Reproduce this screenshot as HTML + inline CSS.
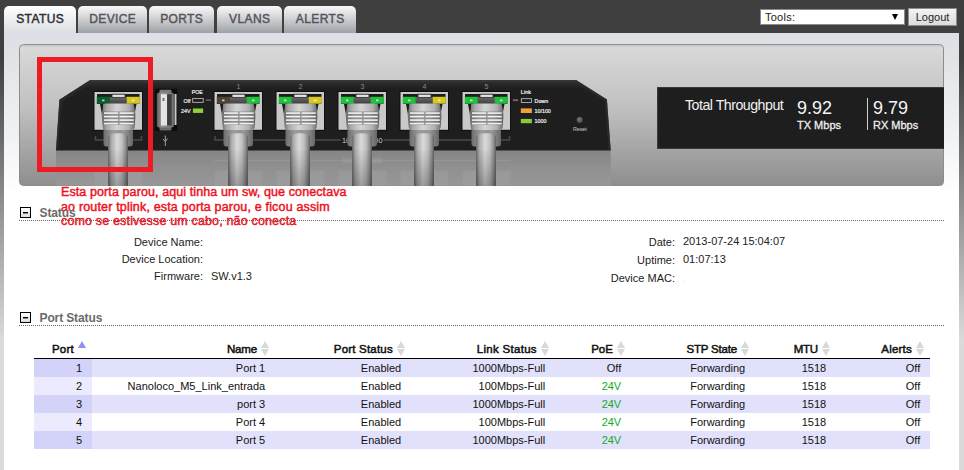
<!DOCTYPE html>
<html><head><meta charset="utf-8">
<style>
*{margin:0;padding:0;box-sizing:border-box}
html,body{width:964px;height:470px;overflow:hidden}
body{position:relative;font-family:"Liberation Sans",sans-serif;background:linear-gradient(to bottom,#404040 0px,#404040 60px,#dadada 340px,#dadada 470px)}
.abs{position:absolute;white-space:nowrap}
#tabs{position:absolute;left:4px;top:6px;height:27px;display:flex}
.tab{position:absolute;top:6px;text-align:center;height:27px;border-radius:5px 5px 0 0;font-weight:normal;font-size:12px;letter-spacing:0.4px;-webkit-text-stroke:0.45px currentColor;text-indent:0.4px;line-height:26px;color:#55555d;background:linear-gradient(to bottom,#f8f8f8 0%,#d6d7da 40%,#9ea1a6 100%)}
.tab.act{color:#2f2f33;background:linear-gradient(to bottom,#ffffff 0%,#eceef0 50%,#dcdfe3 100%)}
#panel{position:absolute;left:4px;top:33px;width:955px;height:437px;background:linear-gradient(to bottom,#dcdfe3 0px,#f0f1f3 100px,#ffffff 160px)}
#tools{position:absolute;left:760px;top:9px;width:145px;height:16px;background:#fff;border:1px solid #8a8a8a;font-size:11px;line-height:14px;padding-left:4px;color:#222;letter-spacing:0.25px}
#tools span{position:absolute;left:130.8px;top:3.8px;width:0;height:0;border-left:3px solid transparent;border-right:3px solid transparent;border-top:6px solid #000}
#logout{position:absolute;left:908px;top:8px;width:49px;height:18px;background:linear-gradient(#f4f4f4,#dcdcdc);border:1px solid #8d8d8d;font-size:11px;line-height:16px;text-align:center;color:#222}
.sec{position:absolute;left:19px;width:925px;height:1px;border-bottom:1px dotted #666}
.box{position:absolute;left:20px;width:11px;height:11px;border:1px solid #000;background:linear-gradient(#fff,#ddd)}
.box:after{content:"";position:absolute;left:2px;top:4px;width:5px;height:1px;background:#000;box-shadow:0 1px 0 rgba(0,0,0,0.45)}
.sectitle{position:absolute;left:39.5px;font-weight:bold;font-size:12px;color:#6a6a6a;letter-spacing:-0.12px}
.lbl{position:absolute;font-size:11px;color:#222;text-align:right;white-space:nowrap}
.val{position:absolute;font-size:11px;color:#222;white-space:nowrap}
#tbl{position:absolute;left:34px;top:340px;width:896px}
.hdr{position:absolute;top:0;height:18px;font-weight:bold;font-size:11px;color:#111;white-space:nowrap}
.row{position:absolute;left:0;width:896px;height:18px}
.cell{position:absolute;font-size:11px;color:#111;white-space:nowrap;line-height:18px}
.note{position:absolute;left:61px;font-weight:normal;font-size:12.5px;line-height:14px;color:#ee1122;white-space:nowrap;-webkit-text-stroke:0.45px #ee1122}
.rw{position:absolute;left:34px;width:896px;height:18px}
.rw.o{background:#e1e1fc}
.rw.e{background:#fff}
.rw i{position:absolute;left:0;top:0;width:58px;height:18px}
.rw.o i{background:#d3d3f9}
.rw.e i{background:#ebebfd}
.hline{position:absolute;left:34px;top:358px;width:896px;height:1px;background:#000}
.th{position:absolute;top:342px;font-weight:normal;font-size:11.5px;line-height:14px;color:#111;white-space:nowrap;-webkit-text-stroke:0.5px #111;letter-spacing:0.2px}
.sa{position:absolute;width:0;height:0;border-left:4.75px solid transparent;border-right:4.75px solid transparent;margin-left:-0.25px}
.sa.up{top:340.8px;border-bottom:7px solid #d8d8d8}
.sa.dn{top:349.3px;border-top:7px solid #d8d8d8}
.sa.act{border-bottom-color:#9090f5}
.td{position:absolute;font-size:11px;line-height:18px;color:#111;white-space:nowrap}
.td.g{color:#11aa22}
</style></head><body>
<div class="tab act" style="left:4px;width:72px">STATUS</div><div class="tab" style="left:78px;width:69px">DEVICE</div><div class="tab" style="left:149px;width:65px">PORTS</div><div class="tab" style="left:217px;width:65px">VLANS</div><div class="tab" style="left:284px;width:72px">ALERTS</div>
<div id="tools">Tools:<span></span></div>
<div id="logout">Logout</div>
<div id="panel"></div>

<svg id="dev" style="position:absolute;left:19px;top:44px" width="925" height="142" viewBox="19 44 925 142">
<defs>
<linearGradient id="pg" x1="0" y1="0" x2="0" y2="1"><stop offset="0" stop-color="#dadada"/><stop offset="0.45" stop-color="#c0c0c0"/><stop offset="1" stop-color="#8e8e8e"/></linearGradient>
<linearGradient id="cab" x1="0" y1="0" x2="1" y2="0"><stop offset="0" stop-color="#666"/><stop offset="0.15" stop-color="#a8a8a8"/><stop offset="0.45" stop-color="#dadada"/><stop offset="0.7" stop-color="#c0c0c0"/><stop offset="0.9" stop-color="#8a8a8a"/><stop offset="1" stop-color="#5e5e5e"/></linearGradient>
<linearGradient id="plg" x1="0" y1="0" x2="1" y2="0"><stop offset="0" stop-color="#6e6e6e"/><stop offset="0.15" stop-color="#a8a8a8"/><stop offset="0.45" stop-color="#d6d6d6"/><stop offset="0.8" stop-color="#b0b0b0"/><stop offset="1" stop-color="#6a6a6a"/></linearGradient>
<linearGradient id="rdg" x1="0" y1="0" x2="1" y2="0"><stop offset="0" stop-color="#6e6e6e"/><stop offset="0.3" stop-color="#939393"/><stop offset="0.7" stop-color="#8c8c8c"/><stop offset="1" stop-color="#666"/></linearGradient>
<linearGradient id="boot" x1="0" y1="0" x2="1" y2="0"><stop offset="0" stop-color="#6c6c6c"/><stop offset="0.3" stop-color="#9a9a9a"/><stop offset="0.7" stop-color="#949494"/><stop offset="1" stop-color="#666"/></linearGradient>
<linearGradient id="cabfade" x1="0" y1="0" x2="0" y2="1"><stop offset="0" stop-color="#000" stop-opacity="0.02"/><stop offset="1" stop-color="#000" stop-opacity="0.28"/></linearGradient>
<linearGradient id="tbar" x1="0" y1="0" x2="0" y2="1"><stop offset="0" stop-color="#6a6a6a"/><stop offset="1" stop-color="#3e3e3e"/></linearGradient>
<linearGradient id="body" x1="0" y1="80" x2="0" y2="150.5" gradientUnits="userSpaceOnUse"><stop offset="0" stop-color="#3a3a3a"/><stop offset="0.05" stop-color="#2a2a2a"/><stop offset="0.12" stop-color="#1f1f1f"/><stop offset="1" stop-color="#1e1e1e"/></linearGradient>
<linearGradient id="refl" x1="0" y1="0" x2="0" y2="1"><stop offset="0" stop-color="#858585"/><stop offset="0.5" stop-color="#909090"/><stop offset="1" stop-color="#979797"/></linearGradient>
<linearGradient id="usb" x1="0" y1="0" x2="1" y2="0"><stop offset="0" stop-color="#5e5e5e"/><stop offset="0.3" stop-color="#9a9a9a"/><stop offset="1" stop-color="#6a6a6a"/></linearGradient>
<radialGradient id="rst" cx="0.45" cy="0.4" r="0.7"><stop offset="0" stop-color="#7a7a7a"/><stop offset="1" stop-color="#3a3a3a"/></radialGradient>
</defs>
<rect x="19.5" y="44.5" width="924" height="141" rx="4" fill="url(#pg)" stroke="#8c8c8c"/>
<rect x="22" y="45.5" width="919" height="1" fill="#b4b4b4" opacity="0.6"/>
<path d="M56 150 L610.7 150 L611 185.5 L56 185.5 Z" fill="url(#refl)"/>
<rect x="94.5" y="170.5" width="48" height="15" fill="#a0a0a0" opacity="0.5"/>
<rect x="214.5" y="170.5" width="48" height="15" fill="#a0a0a0" opacity="0.5"/>
<rect x="276.5" y="170.5" width="48" height="15" fill="#a0a0a0" opacity="0.5"/>
<rect x="338.5" y="170.5" width="48" height="15" fill="#a0a0a0" opacity="0.5"/>
<rect x="400.5" y="170.5" width="48" height="15" fill="#a0a0a0" opacity="0.5"/>
<rect x="462.5" y="170.5" width="48" height="15" fill="#a0a0a0" opacity="0.5"/>
<rect x="214" y="160" width="296" height="1" fill="#a0a0a0" opacity="0.5"/>
<path d="M90 80 L576.3 80 L606.9 99.6 L610.7 150.5 L56 150.5 L59.4 99.7 Z" fill="url(#body)"/>
<path d="M59.4 99.7 L90 80.5 L92 82.5 L62 101.5 L58.2 149 L56 150 Z" fill="#2c2c2c" opacity="0.7"/>
<path d="M576.3 80.5 L606.9 99.6 L610.7 150 L608.5 150 L604.8 101 L575.5 82.5 Z" fill="#2e2e2e" opacity="0.7"/>
<rect x="657.5" y="87.5" width="290" height="61" fill="#1e1e1e" stroke="#3a3a3a"/>
<text x="685" y="110.2" font-family="Liberation Sans" font-size="14.2" letter-spacing="-0.5" fill="#f2f2f2">Total Throughput</text>
<text x="797" y="113.5" font-family="Liberation Sans" font-size="18" fill="#f5f5f5">9.92</text>
<text x="797" y="129" font-family="Liberation Sans" font-size="11" fill="#eeeeee" stroke="#eeeeee" stroke-width="0.3">TX Mbps</text>
<rect x="867" y="98" width="1" height="32" fill="#d0d0d0"/>
<text x="873" y="113.5" font-family="Liberation Sans" font-size="18" fill="#f5f5f5">9.79</text>
<text x="873" y="129" font-family="Liberation Sans" font-size="11" fill="#eeeeee" stroke="#eeeeee" stroke-width="0.3">RX Mbps</text>
<path d="M95.5 136 V140 H141.5 V136" fill="none" stroke="#4a4a4a" stroke-width="1.5"/>
<path d="M215 136 V140 H340.6 M383.7 140 H509.5 V136" fill="none" stroke="#4a4a4a" stroke-width="1.5"/>
<text x="362.2" y="143" font-family="Liberation Sans" font-size="7.3" fill="#c8c8c8" text-anchor="middle">10/100/1000</text>
<text x="362.2" y="163" font-family="Liberation Sans" font-size="7.3" fill="#b4b4b4" opacity="0.6" text-anchor="middle">10/100/1000</text>
<rect x="154.8" y="88.8" width="22.4" height="42.2" fill="#0c0c0c"/>
<rect x="159.5" y="89.8" width="12" height="4" rx="1" fill="#7a7a7a"/>
<rect x="159.5" y="126.5" width="12" height="4" rx="1" fill="#6a6a6a"/>
<rect x="156.8" y="92.5" width="17.2" height="35" rx="2.5" fill="url(#usb)"/>
<rect x="160.9" y="94.2" width="6.2" height="31.3" fill="#e4e4e4"/>
<rect x="167.1" y="94.2" width="4.5" height="31.3" fill="#3c3c3c"/>
<rect x="174.5" y="94" width="2" height="31" fill="#c8c8c8"/>
<rect x="162.5" y="98" width="2" height="3" fill="#777"/>
<path d="M165.3 135.5 V146 M163 139 L165.3 141.5 L167.6 138.5" fill="none" stroke="#a0a0a0" stroke-width="1"/>
<text x="197.3" y="94.3" font-family="Liberation Sans" font-size="5.2" fill="#eeeeee" stroke="#eeeeee" stroke-width="0.2" text-anchor="middle">POE</text>
<text x="190.6" y="102.5" font-family="Liberation Sans" font-size="5.4" fill="#eeeeee" stroke="#eeeeee" stroke-width="0.2" text-anchor="end">Off</text>
<rect x="192.7" y="98.5" width="10.5" height="3.8" fill="none" stroke="#c8c8c8" stroke-width="0.8"/>
<rect x="206" y="99.6" width="5" height="1" fill="#888"/>
<text x="190.6" y="113" font-family="Liberation Sans" font-size="5.4" fill="#eeeeee" stroke="#eeeeee" stroke-width="0.2" text-anchor="end">24V</text>
<rect x="192.9" y="108.5" width="10.2" height="4.4" fill="#8fd23c"/>
<text x="520.8" y="94.2" font-family="Liberation Sans" font-size="5.6" fill="#f4f4f4" stroke="#f4f4f4" stroke-width="0.2">Link</text>
<rect x="513" y="99.6" width="5" height="1" fill="#aaa"/>
<rect x="521.3" y="98.7" width="10.2" height="3.8" fill="none" stroke="#c8c8c8" stroke-width="0.8"/>
<text x="534.6" y="102.8" font-family="Liberation Sans" font-size="5.3" fill="#f4f4f4" stroke="#f4f4f4" stroke-width="0.2">Down</text>
<rect x="520.8" y="108.4" width="11.1" height="4.6" fill="#f2a236"/>
<text x="534.6" y="113" font-family="Liberation Sans" font-size="5.3" fill="#f4f4f4" stroke="#f4f4f4" stroke-width="0.2">10/100</text>
<rect x="520.8" y="118.9" width="11.1" height="4.3" fill="#8acc36"/>
<text x="534.6" y="123.2" font-family="Liberation Sans" font-size="5.3" fill="#f4f4f4" stroke="#f4f4f4" stroke-width="0.2">1000</text>
<circle cx="579.7" cy="120" r="3.5" fill="url(#rst)" stroke="#111" stroke-width="0.5"/>
<text x="579.8" y="131.4" font-family="Liberation Sans" font-size="5.3" fill="#a8a8a8" stroke="#a8a8a8" stroke-width="0.15" text-anchor="middle">Reset</text>
<rect x="93.5" y="90.8" width="49.5" height="40" fill="#0e0e0e"/>
<rect x="94.5" y="92" width="47.5" height="37.8" fill="#c9c9c9"/>
<rect x="97.0" y="94" width="42.5" height="10" fill="#1c1c1c"/>
<path d="M100.0 104 H103.5 L104.0 125 Z" fill="#1c1c1c"/>
<path d="M136.5 104 H133.0 L132.5 125 Z" fill="#1c1c1c"/>
<rect x="109.5" y="97" width="17.5" height="7" fill="url(#tbar)"/>
<rect x="112.0" y="94.2" width="13" height="3.2" fill="#e4e4e4" stroke="#333" stroke-width="0.9"/>
<rect x="97.0" y="97" width="12.5" height="6.5" fill="#0b5e2c" stroke="#0b5e2c" stroke-opacity="0.45" stroke-width="1"/>
<rect x="127.0" y="97" width="12.5" height="6.5" fill="#d8c81c" stroke="#d8c81c" stroke-opacity="0.45" stroke-width="1"/>
<rect x="102.0" y="99.6" width="2.5" height="1.6" fill="#e8fff0" opacity="0.8"/>
<rect x="132.0" y="99.6" width="2.5" height="1.6" fill="#e8fff0" opacity="0.8"/>
<path d="M103.5 128 H133.0 V143.5 Q133.0 146.5 130.0 146.5 H106.5 Q103.5 146.5 103.5 143.5 Z" fill="url(#boot)"/>
<path d="M103.2 106 Q103.2 103.6 105.7 103.6 H131.7 Q134.2 103.6 134.2 106 L135.5 115 L134.7 127.5 Q134.3 130 131.7 130 H105.7 Q103.1 130 102.7 127.5 L101.7 115 Z" fill="url(#plg)"/>
<path d="M108.1 186 V138 Q108.1 133.3 118.0 133.3 Q127.9 133.3 127.9 138 V186 Z" fill="url(#cab)"/>
<rect x="108.1" y="150" width="19.8" height="36" fill="url(#cabfade)"/>
<path d="M103.1 111.5 H134.5 L135.1 118 L134.7 125 H103.1 L102.4 118 Z" fill="url(#rdg)"/>
<rect x="104.0" y="112.3" width="14.2" height="1.6" fill="#f2f2f2"/>
<rect x="119.5" y="112.3" width="14.2" height="1.6" fill="#f2f2f2"/>
<rect x="104.0" y="115.8" width="14.2" height="1.6" fill="#f2f2f2"/>
<rect x="119.5" y="115.8" width="14.2" height="1.6" fill="#f2f2f2"/>
<rect x="104.0" y="119.3" width="14.2" height="1.6" fill="#f2f2f2"/>
<rect x="119.5" y="119.3" width="14.2" height="1.6" fill="#f2f2f2"/>
<rect x="104.0" y="122.8" width="14.2" height="1.6" fill="#f2f2f2"/>
<rect x="119.5" y="122.8" width="14.2" height="1.6" fill="#f2f2f2"/>
<text x="238.5" y="89" font-family="Liberation Sans" font-size="7" fill="#8a8a8a" text-anchor="middle">1</text>
<rect x="213.5" y="90.8" width="49.5" height="40" fill="#0e0e0e"/>
<rect x="214.5" y="92" width="47.5" height="37.8" fill="#c9c9c9"/>
<rect x="217.0" y="94" width="42.5" height="10" fill="#1c1c1c"/>
<path d="M220.0 104 H223.5 L224.0 125 Z" fill="#1c1c1c"/>
<path d="M256.5 104 H253.0 L252.5 125 Z" fill="#1c1c1c"/>
<rect x="229.5" y="97" width="17.5" height="7" fill="url(#tbar)"/>
<rect x="232.0" y="94.2" width="13" height="3.2" fill="#e4e4e4" stroke="#333" stroke-width="0.9"/>
<rect x="217.0" y="97" width="12.5" height="6.5" fill="#4c4236" stroke="#4c4236" stroke-opacity="0.45" stroke-width="1"/>
<rect x="247.0" y="97" width="12.5" height="6.5" fill="#1fc23a" stroke="#1fc23a" stroke-opacity="0.45" stroke-width="1"/>
<rect x="222.0" y="99.6" width="2.5" height="1.6" fill="#e8fff0" opacity="0.8"/>
<rect x="252.0" y="99.6" width="2.5" height="1.6" fill="#e8fff0" opacity="0.8"/>
<path d="M223.5 128 H253.0 V143.5 Q253.0 146.5 250.0 146.5 H226.5 Q223.5 146.5 223.5 143.5 Z" fill="url(#boot)"/>
<path d="M223.2 106 Q223.2 103.6 225.7 103.6 H251.7 Q254.2 103.6 254.2 106 L255.5 115 L254.7 127.5 Q254.3 130 251.7 130 H225.7 Q223.1 130 222.7 127.5 L221.7 115 Z" fill="url(#plg)"/>
<path d="M228.1 186 V138 Q228.1 133.3 238.0 133.3 Q247.9 133.3 247.9 138 V186 Z" fill="url(#cab)"/>
<rect x="228.1" y="150" width="19.8" height="36" fill="url(#cabfade)"/>
<path d="M223.1 111.5 H254.5 L255.1 118 L254.7 125 H223.1 L222.4 118 Z" fill="url(#rdg)"/>
<rect x="224.0" y="112.3" width="14.2" height="1.6" fill="#f2f2f2"/>
<rect x="239.5" y="112.3" width="14.2" height="1.6" fill="#f2f2f2"/>
<rect x="224.0" y="115.8" width="14.2" height="1.6" fill="#f2f2f2"/>
<rect x="239.5" y="115.8" width="14.2" height="1.6" fill="#f2f2f2"/>
<rect x="224.0" y="119.3" width="14.2" height="1.6" fill="#f2f2f2"/>
<rect x="239.5" y="119.3" width="14.2" height="1.6" fill="#f2f2f2"/>
<rect x="224.0" y="122.8" width="14.2" height="1.6" fill="#f2f2f2"/>
<rect x="239.5" y="122.8" width="14.2" height="1.6" fill="#f2f2f2"/>
<text x="300.5" y="89" font-family="Liberation Sans" font-size="7" fill="#8a8a8a" text-anchor="middle">2</text>
<rect x="275.5" y="90.8" width="49.5" height="40" fill="#0e0e0e"/>
<rect x="276.5" y="92" width="47.5" height="37.8" fill="#c9c9c9"/>
<rect x="279.0" y="94" width="42.5" height="10" fill="#1c1c1c"/>
<path d="M282.0 104 H285.5 L286.0 125 Z" fill="#1c1c1c"/>
<path d="M318.5 104 H315.0 L314.5 125 Z" fill="#1c1c1c"/>
<rect x="291.5" y="97" width="17.5" height="7" fill="url(#tbar)"/>
<rect x="294.0" y="94.2" width="13" height="3.2" fill="#e4e4e4" stroke="#333" stroke-width="0.9"/>
<rect x="279.0" y="97" width="12.5" height="6.5" fill="#1fc23a" stroke="#1fc23a" stroke-opacity="0.45" stroke-width="1"/>
<rect x="309.0" y="97" width="12.5" height="6.5" fill="#d8c81c" stroke="#d8c81c" stroke-opacity="0.45" stroke-width="1"/>
<rect x="284.0" y="99.6" width="2.5" height="1.6" fill="#e8fff0" opacity="0.8"/>
<rect x="314.0" y="99.6" width="2.5" height="1.6" fill="#e8fff0" opacity="0.8"/>
<path d="M285.5 128 H315.0 V143.5 Q315.0 146.5 312.0 146.5 H288.5 Q285.5 146.5 285.5 143.5 Z" fill="url(#boot)"/>
<path d="M285.2 106 Q285.2 103.6 287.7 103.6 H313.7 Q316.2 103.6 316.2 106 L317.5 115 L316.7 127.5 Q316.3 130 313.7 130 H287.7 Q285.1 130 284.7 127.5 L283.7 115 Z" fill="url(#plg)"/>
<path d="M290.1 186 V138 Q290.1 133.3 300.0 133.3 Q309.9 133.3 309.9 138 V186 Z" fill="url(#cab)"/>
<rect x="290.1" y="150" width="19.8" height="36" fill="url(#cabfade)"/>
<path d="M285.1 111.5 H316.5 L317.1 118 L316.7 125 H285.1 L284.4 118 Z" fill="url(#rdg)"/>
<rect x="286.0" y="112.3" width="14.2" height="1.6" fill="#f2f2f2"/>
<rect x="301.5" y="112.3" width="14.2" height="1.6" fill="#f2f2f2"/>
<rect x="286.0" y="115.8" width="14.2" height="1.6" fill="#f2f2f2"/>
<rect x="301.5" y="115.8" width="14.2" height="1.6" fill="#f2f2f2"/>
<rect x="286.0" y="119.3" width="14.2" height="1.6" fill="#f2f2f2"/>
<rect x="301.5" y="119.3" width="14.2" height="1.6" fill="#f2f2f2"/>
<rect x="286.0" y="122.8" width="14.2" height="1.6" fill="#f2f2f2"/>
<rect x="301.5" y="122.8" width="14.2" height="1.6" fill="#f2f2f2"/>
<text x="362.5" y="89" font-family="Liberation Sans" font-size="7" fill="#8a8a8a" text-anchor="middle">3</text>
<rect x="337.5" y="90.8" width="49.5" height="40" fill="#0e0e0e"/>
<rect x="338.5" y="92" width="47.5" height="37.8" fill="#c9c9c9"/>
<rect x="341.0" y="94" width="42.5" height="10" fill="#1c1c1c"/>
<path d="M344.0 104 H347.5 L348.0 125 Z" fill="#1c1c1c"/>
<path d="M380.5 104 H377.0 L376.5 125 Z" fill="#1c1c1c"/>
<rect x="353.5" y="97" width="17.5" height="7" fill="url(#tbar)"/>
<rect x="356.0" y="94.2" width="13" height="3.2" fill="#e4e4e4" stroke="#333" stroke-width="0.9"/>
<rect x="341.0" y="97" width="12.5" height="6.5" fill="#1fc23a" stroke="#1fc23a" stroke-opacity="0.45" stroke-width="1"/>
<rect x="371.0" y="97" width="12.5" height="6.5" fill="#1fc23a" stroke="#1fc23a" stroke-opacity="0.45" stroke-width="1"/>
<rect x="346.0" y="99.6" width="2.5" height="1.6" fill="#e8fff0" opacity="0.8"/>
<rect x="376.0" y="99.6" width="2.5" height="1.6" fill="#e8fff0" opacity="0.8"/>
<path d="M347.5 128 H377.0 V143.5 Q377.0 146.5 374.0 146.5 H350.5 Q347.5 146.5 347.5 143.5 Z" fill="url(#boot)"/>
<path d="M347.2 106 Q347.2 103.6 349.7 103.6 H375.7 Q378.2 103.6 378.2 106 L379.5 115 L378.7 127.5 Q378.3 130 375.7 130 H349.7 Q347.1 130 346.7 127.5 L345.7 115 Z" fill="url(#plg)"/>
<path d="M352.1 186 V138 Q352.1 133.3 362.0 133.3 Q371.9 133.3 371.9 138 V186 Z" fill="url(#cab)"/>
<rect x="352.1" y="150" width="19.8" height="36" fill="url(#cabfade)"/>
<path d="M347.1 111.5 H378.5 L379.1 118 L378.7 125 H347.1 L346.4 118 Z" fill="url(#rdg)"/>
<rect x="348.0" y="112.3" width="14.2" height="1.6" fill="#f2f2f2"/>
<rect x="363.5" y="112.3" width="14.2" height="1.6" fill="#f2f2f2"/>
<rect x="348.0" y="115.8" width="14.2" height="1.6" fill="#f2f2f2"/>
<rect x="363.5" y="115.8" width="14.2" height="1.6" fill="#f2f2f2"/>
<rect x="348.0" y="119.3" width="14.2" height="1.6" fill="#f2f2f2"/>
<rect x="363.5" y="119.3" width="14.2" height="1.6" fill="#f2f2f2"/>
<rect x="348.0" y="122.8" width="14.2" height="1.6" fill="#f2f2f2"/>
<rect x="363.5" y="122.8" width="14.2" height="1.6" fill="#f2f2f2"/>
<text x="424.5" y="89" font-family="Liberation Sans" font-size="7" fill="#8a8a8a" text-anchor="middle">4</text>
<rect x="399.5" y="90.8" width="49.5" height="40" fill="#0e0e0e"/>
<rect x="400.5" y="92" width="47.5" height="37.8" fill="#c9c9c9"/>
<rect x="403.0" y="94" width="42.5" height="10" fill="#1c1c1c"/>
<path d="M406.0 104 H409.5 L410.0 125 Z" fill="#1c1c1c"/>
<path d="M442.5 104 H439.0 L438.5 125 Z" fill="#1c1c1c"/>
<rect x="415.5" y="97" width="17.5" height="7" fill="url(#tbar)"/>
<rect x="418.0" y="94.2" width="13" height="3.2" fill="#e4e4e4" stroke="#333" stroke-width="0.9"/>
<rect x="403.0" y="97" width="12.5" height="6.5" fill="#1fc23a" stroke="#1fc23a" stroke-opacity="0.45" stroke-width="1"/>
<rect x="433.0" y="97" width="12.5" height="6.5" fill="#d8c81c" stroke="#d8c81c" stroke-opacity="0.45" stroke-width="1"/>
<rect x="408.0" y="99.6" width="2.5" height="1.6" fill="#e8fff0" opacity="0.8"/>
<rect x="438.0" y="99.6" width="2.5" height="1.6" fill="#e8fff0" opacity="0.8"/>
<path d="M409.5 128 H439.0 V143.5 Q439.0 146.5 436.0 146.5 H412.5 Q409.5 146.5 409.5 143.5 Z" fill="url(#boot)"/>
<path d="M409.2 106 Q409.2 103.6 411.7 103.6 H437.7 Q440.2 103.6 440.2 106 L441.5 115 L440.7 127.5 Q440.3 130 437.7 130 H411.7 Q409.1 130 408.7 127.5 L407.7 115 Z" fill="url(#plg)"/>
<path d="M414.1 186 V138 Q414.1 133.3 424.0 133.3 Q433.9 133.3 433.9 138 V186 Z" fill="url(#cab)"/>
<rect x="414.1" y="150" width="19.8" height="36" fill="url(#cabfade)"/>
<path d="M409.1 111.5 H440.5 L441.1 118 L440.7 125 H409.1 L408.4 118 Z" fill="url(#rdg)"/>
<rect x="410.0" y="112.3" width="14.2" height="1.6" fill="#f2f2f2"/>
<rect x="425.5" y="112.3" width="14.2" height="1.6" fill="#f2f2f2"/>
<rect x="410.0" y="115.8" width="14.2" height="1.6" fill="#f2f2f2"/>
<rect x="425.5" y="115.8" width="14.2" height="1.6" fill="#f2f2f2"/>
<rect x="410.0" y="119.3" width="14.2" height="1.6" fill="#f2f2f2"/>
<rect x="425.5" y="119.3" width="14.2" height="1.6" fill="#f2f2f2"/>
<rect x="410.0" y="122.8" width="14.2" height="1.6" fill="#f2f2f2"/>
<rect x="425.5" y="122.8" width="14.2" height="1.6" fill="#f2f2f2"/>
<text x="486.5" y="89" font-family="Liberation Sans" font-size="7" fill="#8a8a8a" text-anchor="middle">5</text>
<rect x="461.5" y="90.8" width="49.5" height="40" fill="#0e0e0e"/>
<rect x="462.5" y="92" width="47.5" height="37.8" fill="#c9c9c9"/>
<rect x="465.0" y="94" width="42.5" height="10" fill="#1c1c1c"/>
<path d="M468.0 104 H471.5 L472.0 125 Z" fill="#1c1c1c"/>
<path d="M504.5 104 H501.0 L500.5 125 Z" fill="#1c1c1c"/>
<rect x="477.5" y="97" width="17.5" height="7" fill="url(#tbar)"/>
<rect x="480.0" y="94.2" width="13" height="3.2" fill="#e4e4e4" stroke="#333" stroke-width="0.9"/>
<rect x="465.0" y="97" width="12.5" height="6.5" fill="#1fc23a" stroke="#1fc23a" stroke-opacity="0.45" stroke-width="1"/>
<rect x="495.0" y="97" width="12.5" height="6.5" fill="#1fc23a" stroke="#1fc23a" stroke-opacity="0.45" stroke-width="1"/>
<rect x="470.0" y="99.6" width="2.5" height="1.6" fill="#e8fff0" opacity="0.8"/>
<rect x="500.0" y="99.6" width="2.5" height="1.6" fill="#e8fff0" opacity="0.8"/>
<path d="M471.5 128 H501.0 V143.5 Q501.0 146.5 498.0 146.5 H474.5 Q471.5 146.5 471.5 143.5 Z" fill="url(#boot)"/>
<path d="M471.2 106 Q471.2 103.6 473.7 103.6 H499.7 Q502.2 103.6 502.2 106 L503.5 115 L502.7 127.5 Q502.3 130 499.7 130 H473.7 Q471.1 130 470.7 127.5 L469.7 115 Z" fill="url(#plg)"/>
<path d="M476.1 186 V138 Q476.1 133.3 486.0 133.3 Q495.9 133.3 495.9 138 V186 Z" fill="url(#cab)"/>
<rect x="476.1" y="150" width="19.8" height="36" fill="url(#cabfade)"/>
<path d="M471.1 111.5 H502.5 L503.1 118 L502.7 125 H471.1 L470.4 118 Z" fill="url(#rdg)"/>
<rect x="472.0" y="112.3" width="14.2" height="1.6" fill="#f2f2f2"/>
<rect x="487.5" y="112.3" width="14.2" height="1.6" fill="#f2f2f2"/>
<rect x="472.0" y="115.8" width="14.2" height="1.6" fill="#f2f2f2"/>
<rect x="487.5" y="115.8" width="14.2" height="1.6" fill="#f2f2f2"/>
<rect x="472.0" y="119.3" width="14.2" height="1.6" fill="#f2f2f2"/>
<rect x="487.5" y="119.3" width="14.2" height="1.6" fill="#f2f2f2"/>
<rect x="472.0" y="122.8" width="14.2" height="1.6" fill="#f2f2f2"/>
<rect x="487.5" y="122.8" width="14.2" height="1.6" fill="#f2f2f2"/>
</svg>

<div id="redbox" style="position:absolute;left:37px;top:57px;width:116px;height:115px;border:5px solid #ed1c24"></div>
<div class="note" style="top:185px;letter-spacing:0.1px">Esta porta parou, aqui tinha um sw, que conectava</div>
<div class="note" style="top:200px;letter-spacing:0.17px">ao router tplink, esta porta parou, e ficou assim</div>
<div class="note" style="top:214px;letter-spacing:0.16px">como se estivesse um cabo, não conecta</div>

<div class="box" style="top:207px"></div>
<div class="sectitle" style="top:206px">Status</div>
<div class="sec" style="top:220px"></div>

<div class="lbl" style="right:761px;top:236px">Device Name:</div>
<div class="lbl" style="right:761px;top:253px">Device Location:</div>
<div class="lbl" style="right:761px;top:270px">Firmware:</div>
<div class="val" style="left:211px;top:270px">SW.v1.3</div>
<div class="lbl" style="right:289px;top:236px">Date:</div>
<div class="lbl" style="right:289px;top:254px">Uptime:</div>
<div class="lbl" style="right:289px;top:272px">Device MAC:</div>
<div class="val" style="left:683px;top:235px">2013-07-24 15:04:07</div>
<div class="val" style="left:683px;top:253px">01:07:13</div>

<div style="position:absolute;left:683px;top:280px;width:1px;height:1px;background:#fde6a8"></div>
<div class="box" style="top:312px"></div>
<div class="sectitle" style="top:311px">Port Status</div>
<div class="sec" style="top:325px"></div>

<div class="rw o" style="top:359px"><i></i></div>
<div class="rw e" style="top:377px"><i></i></div>
<div class="rw o" style="top:395px"><i></i></div>
<div class="rw e" style="top:413px"><i></i></div>
<div class="rw o" style="top:431px"><i></i></div>
<div class="hline"></div>
<div class="th" style="right:890.1px;letter-spacing:0.2px">Port</div>
<div class="sa up act" style="left:78.4px"></div>
<div class="th" style="right:707.1px;letter-spacing:-0.2px">Name</div>
<div class="sa up" style="left:261.4px"></div><div class="sa dn" style="left:261.4px"></div>
<div class="th" style="right:571.1px;letter-spacing:0.2px">Port Status</div>
<div class="sa up" style="left:397.4px"></div><div class="sa dn" style="left:397.4px"></div>
<div class="th" style="right:427.1px;letter-spacing:0.3px">Link Status</div>
<div class="sa up" style="left:541.4px"></div><div class="sa dn" style="left:541.4px"></div>
<div class="th" style="right:351.1px;letter-spacing:0.0px">PoE</div>
<div class="sa up" style="left:617.4px"></div><div class="sa dn" style="left:617.4px"></div>
<div class="th" style="right:227.1px;letter-spacing:-0.2px">STP State</div>
<div class="sa up" style="left:741.4px"></div><div class="sa dn" style="left:741.4px"></div>
<div class="th" style="right:146.1px;letter-spacing:-0.25px">MTU</div>
<div class="sa up" style="left:822.4px"></div><div class="sa dn" style="left:822.4px"></div>
<div class="th" style="right:52.1px;letter-spacing:0.2px">Alerts</div>
<div class="sa up" style="left:916.4px"></div><div class="sa dn" style="left:916.4px"></div>
<div class="td" style="right:881.8px;top:359px">1</div>
<div class="td" style="right:698.8px;top:359px">Port 1</div>
<div class="td" style="right:562.8px;top:359px">Enabled</div>
<div class="td" style="right:418.8px;top:359px">1000Mbps-Full</div>
<div class="td" style="right:342.8px;top:359px">Off</div>
<div class="td" style="right:218.8px;top:359px">Forwarding</div>
<div class="td" style="right:137.8px;top:359px">1518</div>
<div class="td" style="right:43.8px;top:359px">Off</div>
<div class="td" style="right:881.8px;top:377px">2</div>
<div class="td" style="right:698.8px;top:377px">Nanoloco_M5_Link_entrada</div>
<div class="td" style="right:562.8px;top:377px">Enabled</div>
<div class="td" style="right:418.8px;top:377px">100Mbps-Full</div>
<div class="td g" style="right:342.8px;top:377px">24V</div>
<div class="td" style="right:218.8px;top:377px">Forwarding</div>
<div class="td" style="right:137.8px;top:377px">1518</div>
<div class="td" style="right:43.8px;top:377px">Off</div>
<div class="td" style="right:881.8px;top:395px">3</div>
<div class="td" style="right:698.8px;top:395px">port 3</div>
<div class="td" style="right:562.8px;top:395px">Enabled</div>
<div class="td" style="right:418.8px;top:395px">1000Mbps-Full</div>
<div class="td g" style="right:342.8px;top:395px">24V</div>
<div class="td" style="right:218.8px;top:395px">Forwarding</div>
<div class="td" style="right:137.8px;top:395px">1518</div>
<div class="td" style="right:43.8px;top:395px">Off</div>
<div class="td" style="right:881.8px;top:413px">4</div>
<div class="td" style="right:698.8px;top:413px">Port 4</div>
<div class="td" style="right:562.8px;top:413px">Enabled</div>
<div class="td" style="right:418.8px;top:413px">100Mbps-Full</div>
<div class="td g" style="right:342.8px;top:413px">24V</div>
<div class="td" style="right:218.8px;top:413px">Forwarding</div>
<div class="td" style="right:137.8px;top:413px">1518</div>
<div class="td" style="right:43.8px;top:413px">Off</div>
<div class="td" style="right:881.8px;top:431px">5</div>
<div class="td" style="right:698.8px;top:431px">Port 5</div>
<div class="td" style="right:562.8px;top:431px">Enabled</div>
<div class="td" style="right:418.8px;top:431px">1000Mbps-Full</div>
<div class="td g" style="right:342.8px;top:431px">24V</div>
<div class="td" style="right:218.8px;top:431px">Forwarding</div>
<div class="td" style="right:137.8px;top:431px">1518</div>
<div class="td" style="right:43.8px;top:431px">Off</div>
</body></html>
